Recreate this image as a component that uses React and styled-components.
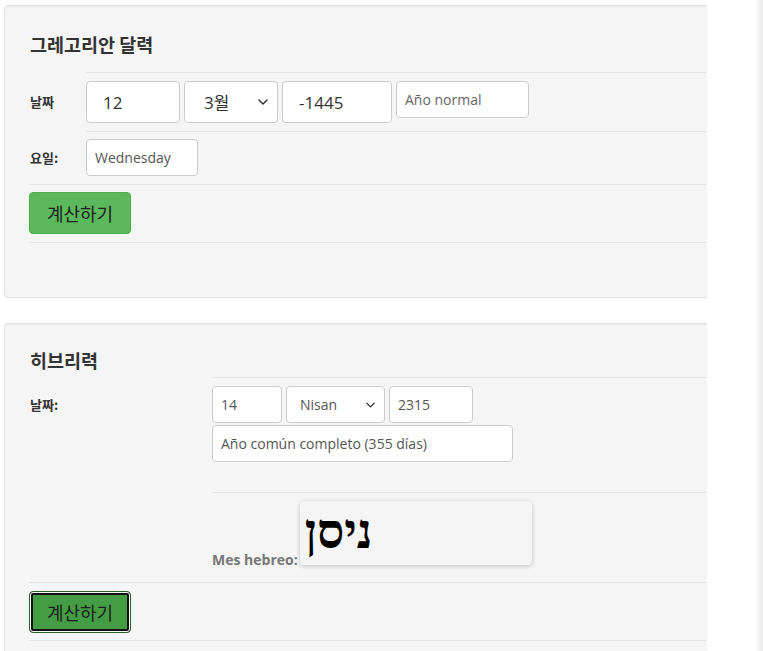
import React from "react";
import styled, { createGlobalStyle } from "styled-components";
import { ChevronDown } from "lucide-react";

const GlobalStyle = createGlobalStyle`
  html, body {
    margin: 0;
    padding: 0;
    background: #fff;
  }
  body {
    font-family: "Open Sans", "Noto Sans CJK KR", sans-serif;
    color: #333;
  }
`;

const Page = styled.div`
  display: flex;
  width: 763px;
  height: 651px;
  overflow: hidden;
`;

const Main = styled.div`
  flex: 0 0 703px;
  margin-left: 4px;
  padding-top: 5px;
  overflow: hidden;
`;

const Gutter = styled.div`
  flex: 1;
`;

const ScrollEdge = styled.div`
  flex: 0 0 6px;
  background: linear-gradient(to right, #f7f7f7, #e9e9e9);
`;

const Well = styled.section`
  width: 780px;
  box-sizing: border-box;
  background: #f5f5f5;
  border: 1px solid #e3e3e3;
  border-radius: 4px;
  box-shadow: inset 0 1px 1px rgba(0, 0, 0, 0.05);
  padding-left: 24px;
  margin-bottom: ${(p) => p.$gap || 0}px;
`;

const Title = styled.h2`
  margin: 0;
  padding-top: ${(p) => p.$top}px;
  margin-bottom: ${(p) => p.$bottom}px;
  font-family: "Noto Sans CJK KR", "Open Sans", sans-serif;
  font-size: 18.5px;
  line-height: 24px;
  font-weight: 700;
  color: #333;
  padding-left: 1px;
`;

const Row = styled.div`
  display: flex;
`;

const Label = styled.div`
  flex: 0 0 ${(p) => p.$w}px;
  font-family: "Noto Sans CJK KR", "Open Sans", sans-serif;
  font-size: 13px;
  font-weight: 700;
  color: #333;
  padding-left: 1px;
  box-sizing: border-box;
  display: flex;
  align-items: ${(p) => (p.$top ? "flex-start" : "center")};
  padding-top: ${(p) => p.$top || 0}px;
`;

const Field = styled.div`
  flex: 1;
  border-top: 1px solid #e6e6e6;
  padding-top: ${(p) => p.$pt}px;
  padding-bottom: ${(p) => p.$pb}px;
`;

const Line = styled.div`
  display: flex;
  gap: 4px;
  align-items: flex-start;
  margin-bottom: ${(p) => p.$mb || 0}px;
`;

const Input = styled.input`
  box-sizing: border-box;
  width: ${(p) => p.$w}px;
  height: ${(p) => (p.$big ? 42 : 37)}px;
  padding: 0 0 0 ${(p) => (p.$big ? 16 : 8)}px;
  border: 1px solid #ccc;
  border-radius: 4px;
  background: #fff;
  font-family: "Open Sans", "Noto Sans CJK KR", sans-serif;
  font-size: ${(p) => (p.$big ? 17 : 14)}px;
  color: ${(p) => (p.$big ? "#333" : "#555")};
  outline: none;
  &::placeholder {
    color: #666;
  }
`;

const SelectBox = styled.div`
  position: relative;
  width: ${(p) => p.$w}px;
  height: ${(p) => (p.$big ? 42 : 37)}px;
`;

const Select = styled.select`
  appearance: none;
  box-sizing: border-box;
  width: 100%;
  height: 100%;
  border: 1px solid #ccc;
  border-radius: 4px;
  background: #fff;
  padding: 0 0 0 ${(p) => (p.$big ? 19 : 13)}px;
  font-family: "Open Sans", "Noto Sans CJK KR", sans-serif;
  font-size: ${(p) => (p.$big ? 17 : 14)}px;
  color: ${(p) => (p.$big ? "#333" : "#555")};
  outline: none;
`;

const Chevron = styled(ChevronDown)`
  position: absolute;
  right: 7px;
  top: 50%;
  transform: translateY(-50%);
  pointer-events: none;
  color: #333;
`;

const ActionRow = styled.div`
  border-top: 1px solid #e6e6e6;
  padding: ${(p) => p.$pt}px 0 ${(p) => p.$pb}px;
`;

const EmptyRow = styled.div`
  border-top: 1px solid #e6e6e6;
  height: ${(p) => p.$h}px;
`;

const Button = styled.button`
  box-sizing: border-box;
  width: 102px;
  height: 42px;
  padding: 0;
  border-radius: 4px;
  font-family: "Noto Sans CJK KR", "Open Sans", sans-serif;
  font-size: 18px;
  color: #1d1d1d;
  cursor: pointer;
  background: ${(p) => (p.$active ? "#449d44" : "#5cb85c")};
  border: 1px solid ${(p) => (p.$active ? "#2b5f2b" : "#4cae4c")};
  box-shadow: ${(p) =>
    p.$active ? "inset 0 0 0 1px #fff, inset 0 0 0 3px #111" : "none"};
`;

const MonthLine = styled.div`
  font-family: "Open Sans", sans-serif;
  font-size: 14px;
  font-weight: 700;
  color: #777;
`;

const HebrewBox = styled.span`
  display: inline-block;
  overflow: hidden;
  vertical-align: baseline;
  box-sizing: border-box;
  width: 232px;
  height: 64px;
  margin-left: 2px;
  border-radius: 4px;
  background: #f5f5f5;
  box-shadow: 0 1px 4px rgba(0, 0, 0, 0.22);
  padding: 0 0 0 5px;
  font-family: "Liberation Serif", "DejaVu Sans", serif;
  font-size: 48px;
  font-weight: 700;
  line-height: 62px;
  color: #000;
`;

function MonthSelect({ w, big, value, options }) {
  return (
    <SelectBox $w={w} $big={big}>
      <Select $big={big} defaultValue={value}>
        {options.map((o) => (
          <option key={o}>{o}</option>
        ))}
      </Select>
      <Chevron size={big ? 16 : 15} strokeWidth={2.2} />
    </SelectBox>
  );
}

const gregMonths = ["1월", "2월", "3월", "4월", "5월", "6월", "7월", "8월", "9월", "10월", "11월", "12월"];
const hebMonths = ["Tishrei", "Heshvan", "Kislev", "Tevet", "Shevat", "Adar", "Nisan", "Iyar", "Sivan", "Tamuz", "Av", "Elul"];

export default function App() {
  return (
    <>
      <GlobalStyle />
      <Page>
        <Main>
          <Well $gap={25}>
            <Title $top={26} $bottom={16}>그레고리안 달력</Title>
            <Row>
              <Label $w={57}>날짜</Label>
              <Field $pt={8} $pb={8}>
                <Line>
                  <Input $big $w={94} defaultValue="12" />
                  <MonthSelect big w={94} value="3월" options={gregMonths} />
                  <Input $big $w={110} defaultValue="-1445" />
                  <Input $w={133} placeholder="Año normal" />
                </Line>
              </Field>
            </Row>
            <Row>
              <Label $w={57}>요일:</Label>
              <Field $pt={7} $pb={8}>
                <Input $w={112} defaultValue="Wednesday" />
              </Field>
            </Row>
            <ActionRow $pt={7} $pb={8}>
              <Button>계산하기</Button>
            </ActionRow>
            <EmptyRow $h={54} />
          </Well>

          <Well>
            <Title $top={24} $bottom={5}>히브리력</Title>
            <Row>
              <Label $w={183} $top={18}>날짜:</Label>
              <Field $pt={8} $pb={30}>
                <Line $mb={2}>
                  <Input $w={70} defaultValue="14" />
                  <MonthSelect w={99} value="Nisan" options={hebMonths} />
                  <Input $w={84} defaultValue="2315" />
                </Line>
                <Input $w={301} defaultValue="Año común completo (355 días)" />
              </Field>
            </Row>
            <Row>
              <Label $w={183} />
              <Field $pt={8} $pb={13}>
                <MonthLine>
                  Mes hebreo:
                  <HebrewBox>ניסן</HebrewBox>
                </MonthLine>
              </Field>
            </Row>
            <ActionRow $pt={8} $pb={7}>
              <Button $active>계산하기</Button>
            </ActionRow>
            <EmptyRow $h={40} />
          </Well>
        </Main>
        <Gutter />
        <ScrollEdge />
      </Page>
    </>
  );
}
